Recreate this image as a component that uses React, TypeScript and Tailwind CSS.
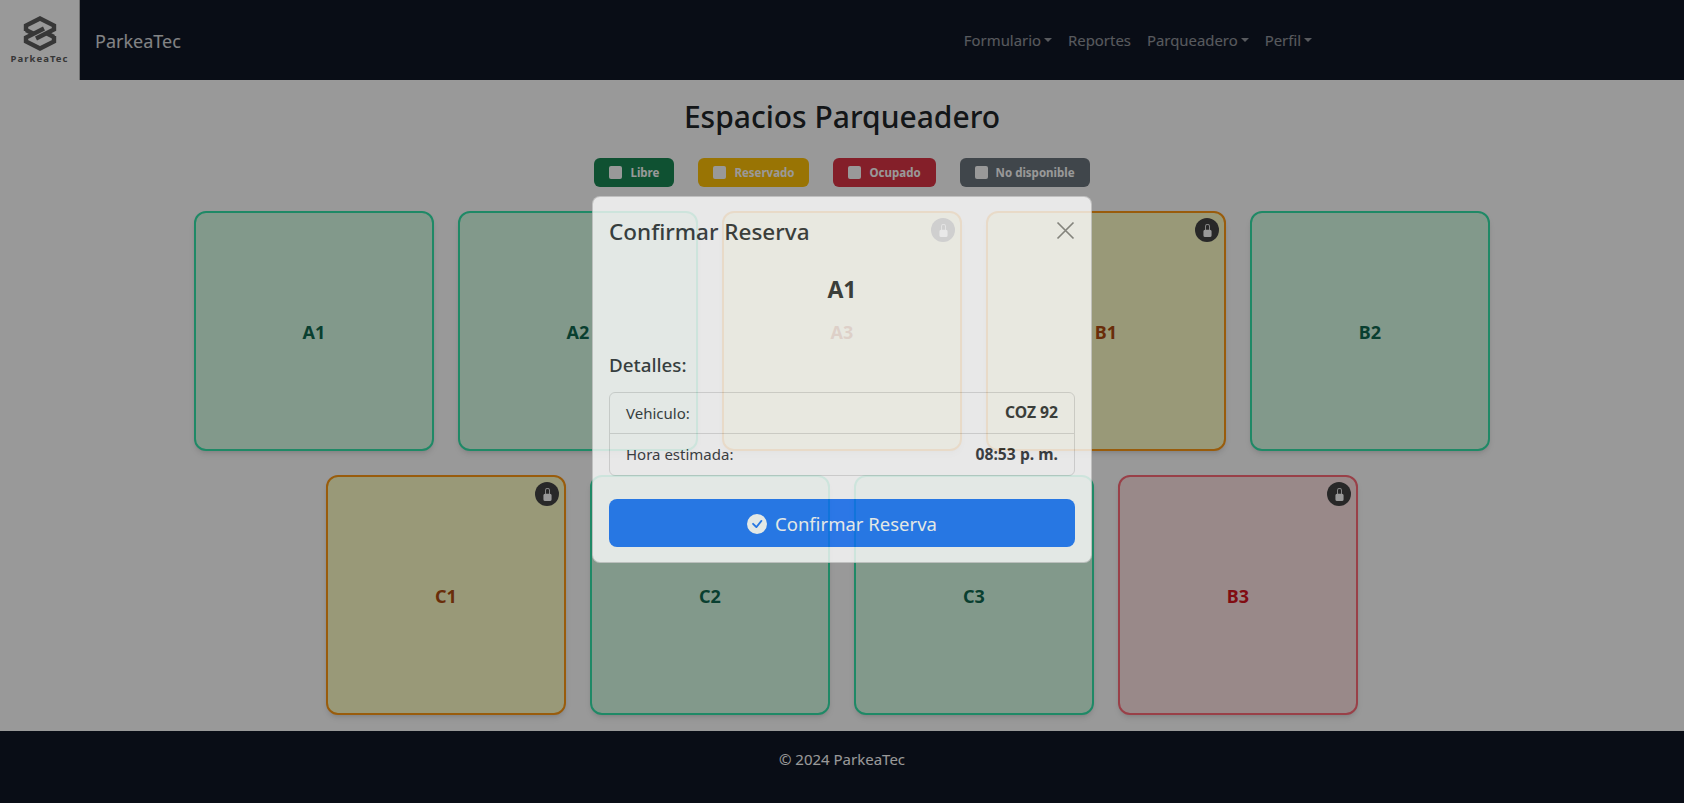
import { BsCheckCircleFill, BsLockFill } from "react-icons/bs";

type SpotState = "free" | "held" | "taken";

const rows: { name: string; state: SpotState }[][] = [
  [
    { name: "A1", state: "free" },
    { name: "A2", state: "free" },
    { name: "A3", state: "held" },
    { name: "B1", state: "held" },
    { name: "B2", state: "free" },
  ],
  [
    { name: "C1", state: "held" },
    { name: "C2", state: "free" },
    { name: "C3", state: "free" },
    { name: "B3", state: "taken" },
  ],
];

const spotStyles: Record<SpotState, string> = {
  free: "border-[#34e5ab] bg-[#d9ffe8] text-[#0f6a50]",
  held: "border-[#ff9a14] bg-[#ffffc8] text-[#b04c10]",
  taken: "border-[#ff6b78] bg-[#ffe4e4] text-[#d8141e]",
};

const legend = [
  { label: "Libre", color: "bg-[#198754]" },
  { label: "Reservado", color: "bg-[#ffc107]" },
  { label: "Ocupado", color: "bg-[#dc3545]" },
  { label: "No disponible", color: "bg-[#6c757d]" },
];

function Logo() {
  return (
    <div className="flex h-20 w-20 shrink-0 flex-col items-center justify-center border-r border-[#bbb] bg-white">
      <svg width="34" height="35" viewBox="0 0 34 35" fill="none" stroke="#5c5c5c" strokeWidth="4.4" strokeLinejoin="miter">
        <path d="M3 15 V9.5 L17 2.5 L31 9.5 V13.5 L13 22.5" />
        <path d="M31 20 V25.5 L17 32.5 L3 25.5 V21.5 L21 12.5" />
        <path d="M3 14 L10 17.5" />
        <path d="M31 21 L24 17.5" />
      </svg>
      <span className="mt-[3px] text-[9.5px] leading-none font-bold tracking-[0.11em] text-[#5c5c5c]">ParkeaTec</span>
    </div>
  );
}

function NavLink({ label, caret }: { label: string; caret?: boolean }) {
  return (
    <a className="flex items-center px-2 py-2 text-[14.9px] text-white/55">
      {label}
      {caret && <span className="ml-[3px] h-0 w-0 border-x-[4.5px] border-t-[4.5px] border-x-transparent border-t-white/55" />}
    </a>
  );
}

function Spot({ name, state }: { name: string; state: SpotState }) {
  return (
    <div
      className={`relative flex h-[240px] w-[240px] items-center justify-center rounded-xl border-2 pt-[2px] text-lg font-bold shadow-md ${spotStyles[state]}`}
    >
      {state !== "free" && (
        <span className="absolute top-[5px] right-[5px] flex h-6 w-6 items-center justify-center rounded-full bg-[#444] text-[13px] text-white">
          <BsLockFill />
        </span>
      )}
      {name}
    </div>
  );
}

export default function App() {
  return (
    <div className="relative flex h-[803px] flex-col overflow-hidden bg-white font-['Noto_Sans',sans-serif] text-[#212529]">
      <header className="flex h-20 shrink-0 items-center bg-[#0f1625]">
        <Logo />
        <span className="ml-[15px] pt-[2px] text-[18px] text-white/85">ParkeaTec</span>
        <nav className="ml-[775px] flex items-center pt-[1px]">
          <NavLink label="Formulario" caret />
          <NavLink label="Reportes" />
          <NavLink label="Parqueadero" caret />
          <NavLink label="Perfil" caret />
        </nav>
      </header>

      <main className="flex flex-1 flex-col items-center pt-4">
        <h1 className="text-[30px] leading-[42px] font-medium">Espacios Parqueadero</h1>
        <div className="mt-[20px] flex gap-6">
          {legend.map((item) => (
            <span
              key={item.label}
              className={`flex h-[29px] items-center gap-2 rounded-md px-[15px] text-[11.5px] font-bold text-white ${item.color}`}
            >
              <span className="h-[13px] w-[13px] rounded-[2px] bg-white" />
              {item.label}
            </span>
          ))}
        </div>
        <div className="mt-6 flex flex-col items-center gap-6">
          {rows.map((row) => (
            <div key={row[0].name} className="flex gap-6">
              {row.map((spot) => (
                <Spot key={spot.name} {...spot} />
              ))}
            </div>
          ))}
        </div>
      </main>

      <footer className="h-[72px] shrink-0 bg-[#0f1625] pt-4 text-center text-[15px] leading-6 text-white">
        © 2024 ParkeaTec
      </footer>

      {/* backdrop + modal caught halfway through its fade, so cards show through */}
      <div className="absolute inset-0 bg-black/40" />
      <div className="absolute top-[196px] left-[592px] flex h-[367px] w-[500px] flex-col rounded-lg border border-black/20 bg-white px-4 opacity-[.775]">
        <div className="flex items-center justify-between pt-[16px]">
          <h2 className="text-[22.5px] leading-[38px] font-medium">Confirmar Reserva</h2>
          <svg width="19" height="19" viewBox="0 0 19 19" stroke="#000" strokeWidth="1.7" className="mb-[4px] opacity-50">
            <path d="M1.5 1.5 L17.5 17.5 M17.5 1.5 L1.5 17.5" />
          </svg>
        </div>
        <p className="mt-[22px] text-center text-[23px] leading-8 font-bold">A1</p>
        <h3 className="mt-[46px] text-[18.8px] leading-7 font-medium">Detalles:</h3>
        <ul className="mt-[13px] rounded-md border border-black/15 text-[15px]">
          <li className="flex h-[41px] items-center justify-between border-b border-black/15 px-4">
            <span>Vehiculo:</span>
            <strong className="text-[15.7px] font-bold">COZ 92</strong>
          </li>
          <li className="flex h-[41px] items-center justify-between px-4">
            <span>Hora estimada:</span>
            <strong className="text-[15.7px] font-bold">08:53 p. m.</strong>
          </li>
        </ul>
        <button
          type="button"
          className="mt-[23px] flex h-12 items-center justify-center gap-2 rounded-lg bg-[#0d6efd] pt-[1px] text-[18.5px] text-white"
        >
          <BsCheckCircleFill className="text-xl" />
          Confirmar Reserva
        </button>
      </div>
    </div>
  );
}
